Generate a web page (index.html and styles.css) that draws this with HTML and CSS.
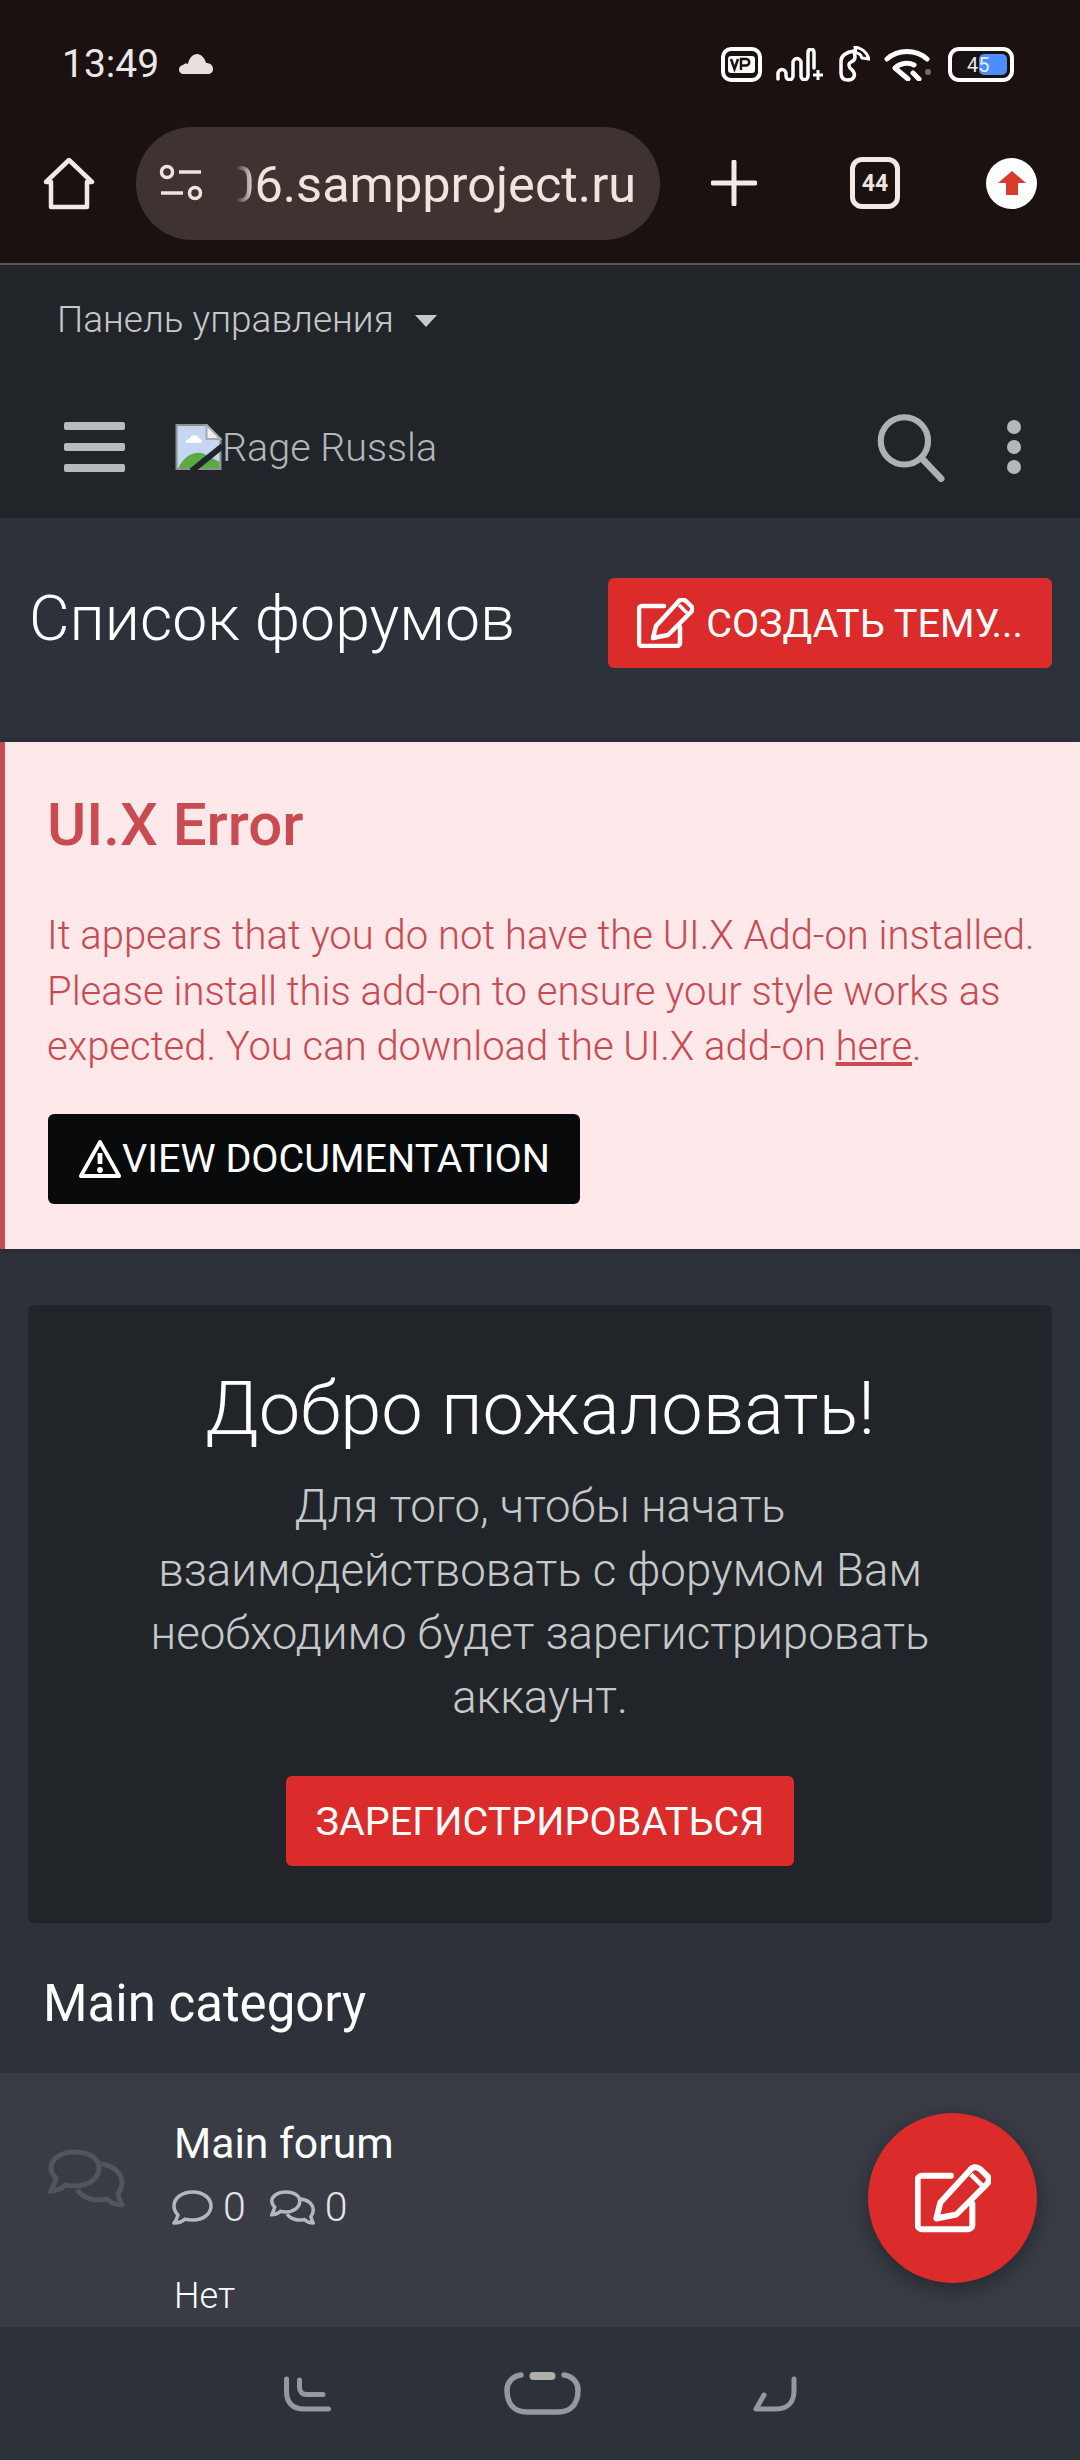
FILE: index.html
```html
<!DOCTYPE html>
<html lang="en">
<head>
    <meta charset="UTF-8">
    <meta name="viewport" content="width=device-width, initial-scale=1.0">
    <title>Список форумов</title>
    <link rel="stylesheet" href="styles.css">
</head>
<body>
    <div class="phone">
        <div class="chrome">
            <div class="status-bar">
                <div class="status-left">
                    <span class="clock">13:49</span>
                    <svg class="cloud" width="34" height="20" viewBox="0 0 34 20"><path d="M5 20a4.500 4.500 0 0 1-1-9c1-1 3-2 5-1 1-6 5-10 9-10s8 4 9 9c4 0 7 2 7 6s-3 5-5 5z" fill="#e6e1e0"/></svg>
                </div>
                <div class="status-right">
                    <svg width="41" height="35" viewBox="0 0 41 35"><rect x="2" y="2" width="37" height="31" rx="8" fill="none" stroke="#fff" stroke-width="4"/><rect x="7" y="9" width="27" height="17" rx="3" fill="#fff"/><path d="M10 12l3.500 10 3.500-10M20 23v-11h5a3.200 3.200 0 0 1 0 6.500h-5" fill="none" stroke="#1a1110" stroke-width="2.500"/></svg>
                    <svg width="49" height="33" viewBox="0 0 49 33"><path d="M2 31v-5c0-6 8-6 8 0v2c0 5 7 5 7 0V15c0-6 8-6 8 0v13c0 5 7 5 7 0V5c0-5 6-5 6 0v15" fill="none" stroke="#fff" stroke-width="3.500" stroke-linecap="round"/><path d="M37 27h10M42 22v10" stroke="#fff" stroke-width="3"/></svg>
                    <svg width="31" height="36" viewBox="0 0 31 36"><path d="M15 5C7 6 2 10 2 15v12c0 5 3 7 7 7 6 0 8-5 5-9l-3-3c-2-3-1-5 1-6 3-1 4-3 4-5z" fill="none" stroke="#fff" stroke-width="3.500"/><path d="M16 1c6 1 12 5 14 12l-7-1c-1-3-3-5-6-5z" fill="none" stroke="#fff" stroke-width="3"/></svg>
                    <svg width="47" height="33" viewBox="0 0 47 33"><path d="M3 11C14 1 32 1 43 11M11 20c5-5 13-6 19-3M11 20l13 11M29 25l6 6" fill="none" stroke="#fff" stroke-width="5" stroke-linecap="round"/><circle cx="44" cy="24" r="3" fill="#6f6f6f"/></svg>
                    <div class="battery"><span class="battery-fill"></span><span class="battery-num">45</span></div>
                </div>
            </div>
            <div class="browser-bar">
                <svg class="home-icon" width="52" height="53" viewBox="0 0 52 53"><path d="M8 50V25H3L26 3l23 22h-5v25z" fill="none" stroke="#f5e9e6" stroke-width="4.500" stroke-linejoin="round"/></svg>
                <div class="address">
                    <svg width="44" height="38" viewBox="0 0 44 38"><circle cx="8" cy="8" r="5.500" fill="none" stroke="#f0e4e1" stroke-width="3.500"/><path d="M20 8h22M2 29h22" stroke="#f0e4e1" stroke-width="3.500"/><circle cx="36" cy="29" r="5.500" fill="none" stroke="#f0e4e1" stroke-width="3.500"/></svg>
                    <span class="url"><span class="url-fade">0</span>6.sampproject.ru</span>
                </div>
                <svg class="plus-icon" width="46" height="46" viewBox="0 0 46 46"><path d="M23 2v42M2 23h42" stroke="#f5e9e6" stroke-width="5" stroke-linecap="round"/></svg>
                <div class="tabs-count">44</div>
                <div class="update-btn">
                    <svg width="30" height="26" viewBox="0 0 30 26"><path d="M15 1l14 12h-8v12H9V13H1z" fill="#d93a2b"/></svg>
                </div>
            </div>
        </div>

        <header class="site-head">
            <div class="panel-link">Панель управления <span class="caret"></span></div>
            <div class="logo-row">
                <div class="burger"><span></span><span></span><span></span></div>
                <div class="logo">
                    <svg width="47" height="46" viewBox="0 0 46 46"><path d="M1 1h30l14 14v30H1z" fill="#c5d6f2" stroke="#8f8f8f" stroke-width="2"/><path d="M31 1v14h14z" fill="#eee" stroke="#aaa" stroke-width="2"/><path d="M14 15c1-5 9-5 10 0 3 0 3 4 0 4H12c-3 0-2-4 2-4z" fill="#fff"/><path d="M3 44c5-12 17-18 26-14l15 8v6z" fill="#5aab42"/><path d="M16 47L47 22" stroke="#212529" stroke-width="6"/></svg>
                    <span>Rage Russla</span>
                </div>
                <div class="head-actions">
                    <svg width="68" height="69" viewBox="0 0 72 72"><circle cx="29" cy="29" r="25" fill="none" stroke="#adb0b4" stroke-width="6.500"/><path d="M47 47l21 22" stroke="#adb0b4" stroke-width="7" stroke-linecap="round"/></svg>
                    <div class="dots"><span></span><span></span><span></span></div>
                </div>
            </div>
        </header>

        <main class="content">
            <div class="page-title">
                <h1>Список форумов</h1>
                <a class="btn btn-red btn-create" href="#">
                    <svg class="edit-icon" width="57" height="50" viewBox="0 0 57 50"><path d="M27 8H5a3 3 0 0 0-3 3v34a3 3 0 0 0 3 3h35a3 3 0 0 0 3-3V29" fill="none" stroke="#fff" stroke-width="4.500" stroke-linecap="round"/><path d="M16 40l3-12L41 4c2-3 5-3 8-1l4 4c3 2 3 5 1 7L31 37z" fill="none" stroke="#fff" stroke-width="4.500" stroke-linejoin="round"/><path d="M42 7l8 8" stroke="#fff" stroke-width="3.500"/></svg>
                    СОЗДАТЬ ТЕМУ...
                </a>
            </div>

            <section class="uix-error">
                <h2>UI.X Error</h2>
                <p>It appears that you do not have the UI.X Add-on installed. Please install this add-on to ensure your style works as expected. You can download the UI.X add-on <a href="#">here</a>.</p>
                <a class="btn btn-black" href="#">
                    <svg width="44" height="40" viewBox="0 0 46 40" preserveAspectRatio="none"><path d="M23 3L3 37h40z" fill="none" stroke="#fff" stroke-width="4" stroke-linejoin="round"/><path d="M23 14v11" stroke="#fff" stroke-width="5"/><circle cx="23" cy="31" r="3" fill="#fff"/></svg>VIEW DOCUMENTATION
                </a>
            </section>

            <section class="welcome">
                <h2>Добро пожаловать!</h2>
                <p>Для того, чтобы начать взаимодействовать с форумом Вам необходимо будет зарегистрировать аккаунт.</p>
                <a class="btn btn-red" href="#">ЗАРЕГИСТРИРОВАТЬСЯ</a>
            </section>

            <h3 class="category">Main category</h3>

            <div class="forum-node">
                <svg class="node-icon" width="77" height="59" viewBox="0 0 77 59"><path d="M27 3C13 3 3 10 3 19c0 4 2 7 5 10-1 5-3 9-5 13 5 0 11-3 15-6 3 1 6 1 9 1 14 0 24-8 24-18S41 3 27 3z" fill="none" stroke="#52555b" stroke-width="5"/><path d="M52 15c12 1 22 8 22 19 0 5-2 8-4 11 1 4 2 8 4 11-6 0-11-2-15-6-12 3-24-1-30-9" fill="none" stroke="#52555b" stroke-width="5" stroke-linejoin="round"/></svg>
                <div class="node-body">
                    <div class="node-title">Main forum</div>
                    <div class="node-stats">
                        <span class="stat">
                            <svg width="41" height="35" viewBox="0 0 41 35"><path d="M21 2C10 2 2 8 2 16c0 4 2 7 4 9-1 3-2 6-4 8 4 0 8-1 11-4 2 1 5 1 8 1 10 0 18-6 18-14S31 2 21 2z" fill="none" stroke="#b4b7be" stroke-width="3.500" stroke-linejoin="round"/></svg>0
                        </span>
                        <span class="stat">
                            <svg width="45" height="35" viewBox="0 0 77 59"><path d="M27 3C13 3 3 10 3 19c0 4 2 7 5 10-1 5-3 9-5 13 5 0 11-3 15-6 3 1 6 1 9 1 14 0 24-8 24-18S41 3 27 3z" fill="none" stroke="#b4b7be" stroke-width="6"/><path d="M52 15c12 1 22 8 22 19 0 5-2 8-4 11 1 4 2 8 4 11-6 0-11-2-15-6-12 3-24-1-30-9" fill="none" stroke="#b4b7be" stroke-width="6" stroke-linejoin="round"/></svg>0
                        </span>
                    </div>
                    <div class="node-last">Нет</div>
                </div>
            </div>
        </main>

        <a class="fab" href="#">
            <svg width="76" height="69" viewBox="0 0 57 50"><path d="M27 8H5a3 3 0 0 0-3 3v34a3 3 0 0 0 3 3h35a3 3 0 0 0 3-3V29" fill="none" stroke="#fff" stroke-width="4.500" stroke-linecap="round"/><path d="M16 40l3-12L41 4c2-3 5-3 8-1l4 4c3 2 3 5 1 7L31 37z" fill="none" stroke="#fff" stroke-width="4.500" stroke-linejoin="round"/><path d="M42 7l8 8" stroke="#fff" stroke-width="3.500"/></svg>
        </a>

        <nav class="system-nav">
            <svg width="50" height="36" viewBox="0 0 50 36"><path d="M3.500 3v12c0 12 6 18 18 18h24M16.500 4v7c0 5 3 7.500 7 7.500H40" fill="none" stroke="#96989c" stroke-width="5" stroke-linecap="round"/></svg>
            <svg width="77" height="44" viewBox="0 0 77 44"><path d="M17 3C8 4 3 11 3 18c0 14 7 22 20 22h31c13 0 20-8 20-22 0-7-5-14-14-15" fill="none" stroke="#96989c" stroke-width="5.500" stroke-linecap="round"/><rect x="25.500" y="0" width="26" height="8" rx="4" fill="#b0aea8"/></svg>
            <svg width="46" height="36" viewBox="0 0 46 36"><path d="M42 3v12c0 11-6 18-18 18H4l8-14" fill="none" stroke="#96989c" stroke-width="5" stroke-linecap="round" stroke-linejoin="round"/></svg>
        </nav>
    </div>
</body>
</html>
```

FILE: styles.css
```css
* {
    box-sizing: border-box;
}

body {
    margin: 0;
    font-family: Roboto, "Noto Sans", sans-serif;
    background: #2d3139;
    color: #fff;
}

a {
    text-decoration: none;
}

.phone {
    position: relative;
    width: 1080px;
    height: 2460px;
    overflow: hidden;
    display: flex;
    flex-direction: column;
}

/* browser chrome */
.chrome {
    height: 265px;
    flex: none;
    background: #1a1110;
    border-bottom: 2px solid #5c5250;
}

.status-bar {
    height: 128px;
    padding: 45px 66px 0 62px;
    display: flex;
    justify-content: space-between;
    align-items: flex-start;
}

.status-left {
    display: flex;
    align-items: center;
    gap: 20px;
    height: 38px;
}

.clock {
    font-size: 39px;
    color: #ece6e4;
}

.status-right {
    display: flex;
    align-items: center;
    gap: 14px;
    height: 38px;
}

.battery {
    position: relative;
    width: 66px;
    height: 35px;
    border: 4px solid #fff;
    border-radius: 11px;
    margin-left: 3px;
}

.battery-fill {
    position: absolute;
    top: 3px;
    right: 3px;
    bottom: 3px;
    width: 28px;
    background: #4d8dff;
    border-radius: 5px;
}

.battery-num {
    position: absolute;
    left: 15px;
    top: 2px;
    font-size: 20px;
    color: #e6ebf2;
}

.browser-bar {
    display: flex;
    align-items: center;
    padding-left: 43px;
    height: 110px;
}

.address {
    width: 524px;
    height: 113px;
    margin-left: 41px;
    background: #3e3331;
    border-radius: 57px;
    display: flex;
    align-items: center;
    padding-left: 23px;
    gap: 23px;
    flex: none;
}

.url {
    padding-top: 2px;
    font-size: 50.500px;
    color: #f0e4e1;
    white-space: nowrap;
}

.url-fade {
    display: inline-block;
    -webkit-mask-image: linear-gradient(to right, transparent 35%, #000 100%);
    mask-image: linear-gradient(to right, transparent 35%, #000 100%);
}

.plus-icon {
    margin-left: 51px;
}

.tabs-count {
    width: 50px;
    height: 52px;
    margin-left: 93px;
    border: 5px solid #f5e9e6;
    border-radius: 12px;
    font-size: 23px;
    font-weight: 700;
    color: #f0e4e1;
    display: flex;
    align-items: center;
    justify-content: center;
}

.update-btn {
    width: 51px;
    height: 51px;
    margin-left: 86px;
    background: #fff;
    border-radius: 50%;
    display: flex;
    align-items: center;
    justify-content: center;
}

/* forum header */
.site-head {
    height: 253px;
    flex: none;
    background: #212529;
}

.panel-link {
    padding: 33px 0 0 57px;
    height: 127px;
    font-size: 37px;
    font-weight: 300;
    color: #c6c8ca;
}

.caret {
    display: inline-block;
    margin-left: 12px;
    vertical-align: 5px;
    border-left: 11px solid transparent;
    border-right: 11px solid transparent;
    border-top: 12px solid #c6c8ca;
}

.logo-row {
    display: flex;
    align-items: center;
    padding: 0 59px 0 64px;
    height: 110px;
}

.burger {
    width: 61px;
    display: flex;
    flex-direction: column;
    gap: 13px;
}

.burger span {
    height: 8px;
    background: #b9babc;
    border-radius: 2px;
}

.logo {
    margin-left: 50px;
    display: flex;
    align-items: center;
    font-size: 39.500px;
    font-weight: 300;
    color: #b4b6b9;
}

.head-actions {
    margin-left: auto;
    display: flex;
    align-items: center;
    gap: 62px;
}

.dots {
    display: flex;
    flex-direction: column;
    gap: 6px;
}

.dots span {
    width: 14px;
    height: 14px;
    border-radius: 50%;
    background: #b4b6b9;
}

/* page */
.content {
    flex: 1;
    min-height: 0;
    overflow: hidden;
    background: #2d3139;
}

.page-title {
    display: flex;
    align-items: center;
    justify-content: space-between;
    padding: 60px 28px 74px 29px;
}

.page-title h1 {
    margin: 0 0 10px;
    font-size: 62.500px;
    font-weight: 300;
}

.btn {
    display: inline-flex;
    align-items: center;
    justify-content: center;
    height: 90px;
    border-radius: 6px;
    font-size: 39.600px;
    color: #fff;
}

.btn-red {
    background: #dc2b2b;
}

.btn-create {
    width: 444px;
    gap: 12px;
}

.btn-black {
    width: 532px;
    background: #090a0b;
}

.uix-error {
    height: 507px;
    padding: 49px 30px 0 42px;
    background: #fee8e9;
    border-left: 5px solid #c84b51;
    box-shadow: 0 2px 6px rgba(0, 0, 0, 0.2);
    color: #c84b51;
}

.uix-error h2 {
    margin: 0 0 49px;
    font-size: 60px;
    line-height: 68px;
    font-weight: 500;
}

.uix-error p {
    margin: 0 0 39px;
    font-size: 40px;
    line-height: 55.500px;
    font-weight: 300;
}

.uix-error p a {
    color: #c84b51;
    text-decoration: underline;
}

.uix-error .btn {
    margin-left: 1px;
}

.welcome {
    margin: 56px 28px 0;
    height: 618px;
    padding: 60px 100px 0;
    background: #212529;
    border-radius: 6px;
    text-align: center;
}

.welcome h2 {
    margin: 0 -60px 23px;
    font-size: 74px;
    line-height: 87px;
    font-weight: 300;
}

.welcome p {
    margin: 0 -10px 47px;
    font-size: 45.600px;
    line-height: 63.500px;
    font-weight: 300;
    color: #c6c8ca;
}

.welcome .btn {
    width: 508px;
}

.category {
    margin: 0;
    padding: 51px 43px 0;
    height: 150px;
    font-size: 51px;
    font-weight: 400;
}

.forum-node {
    display: flex;
    height: 260px;
    padding: 45px 0 0 48px;
    background: #393c45;
}

.node-icon {
    margin: 31px 0 0;
    flex: none;
}

.node-body {
    margin-left: 49px;
}

.node-title {
    font-size: 42.700px;
    line-height: 50px;
}

.node-stats {
    display: flex;
    gap: 24px;
    margin-top: 15px;
    margin-left: -2px;
    font-size: 41px;
    line-height: 48px;
    font-weight: 300;
    color: #e4e5e7;
}

.stat {
    display: flex;
    align-items: center;
    gap: 10px;
}

.node-last {
    margin-top: 44px;
    font-size: 36px;
    line-height: 42px;
    font-weight: 300;
}

/* floats over the forum list */
.fab {
    position: absolute;
    left: 868px;
    top: 2113px;
    width: 169px;
    height: 170px;
    border-radius: 50%;
    background: #dc2b2b;
    box-shadow: 0 6px 20px rgba(0, 0, 0, 0.35);
    display: flex;
    align-items: center;
    justify-content: center;
}

.system-nav {
    height: 133px;
    flex: none;
    background: #2d3139;
    display: flex;
    justify-content: center;
    align-items: center;
    gap: 171px;
}
```
